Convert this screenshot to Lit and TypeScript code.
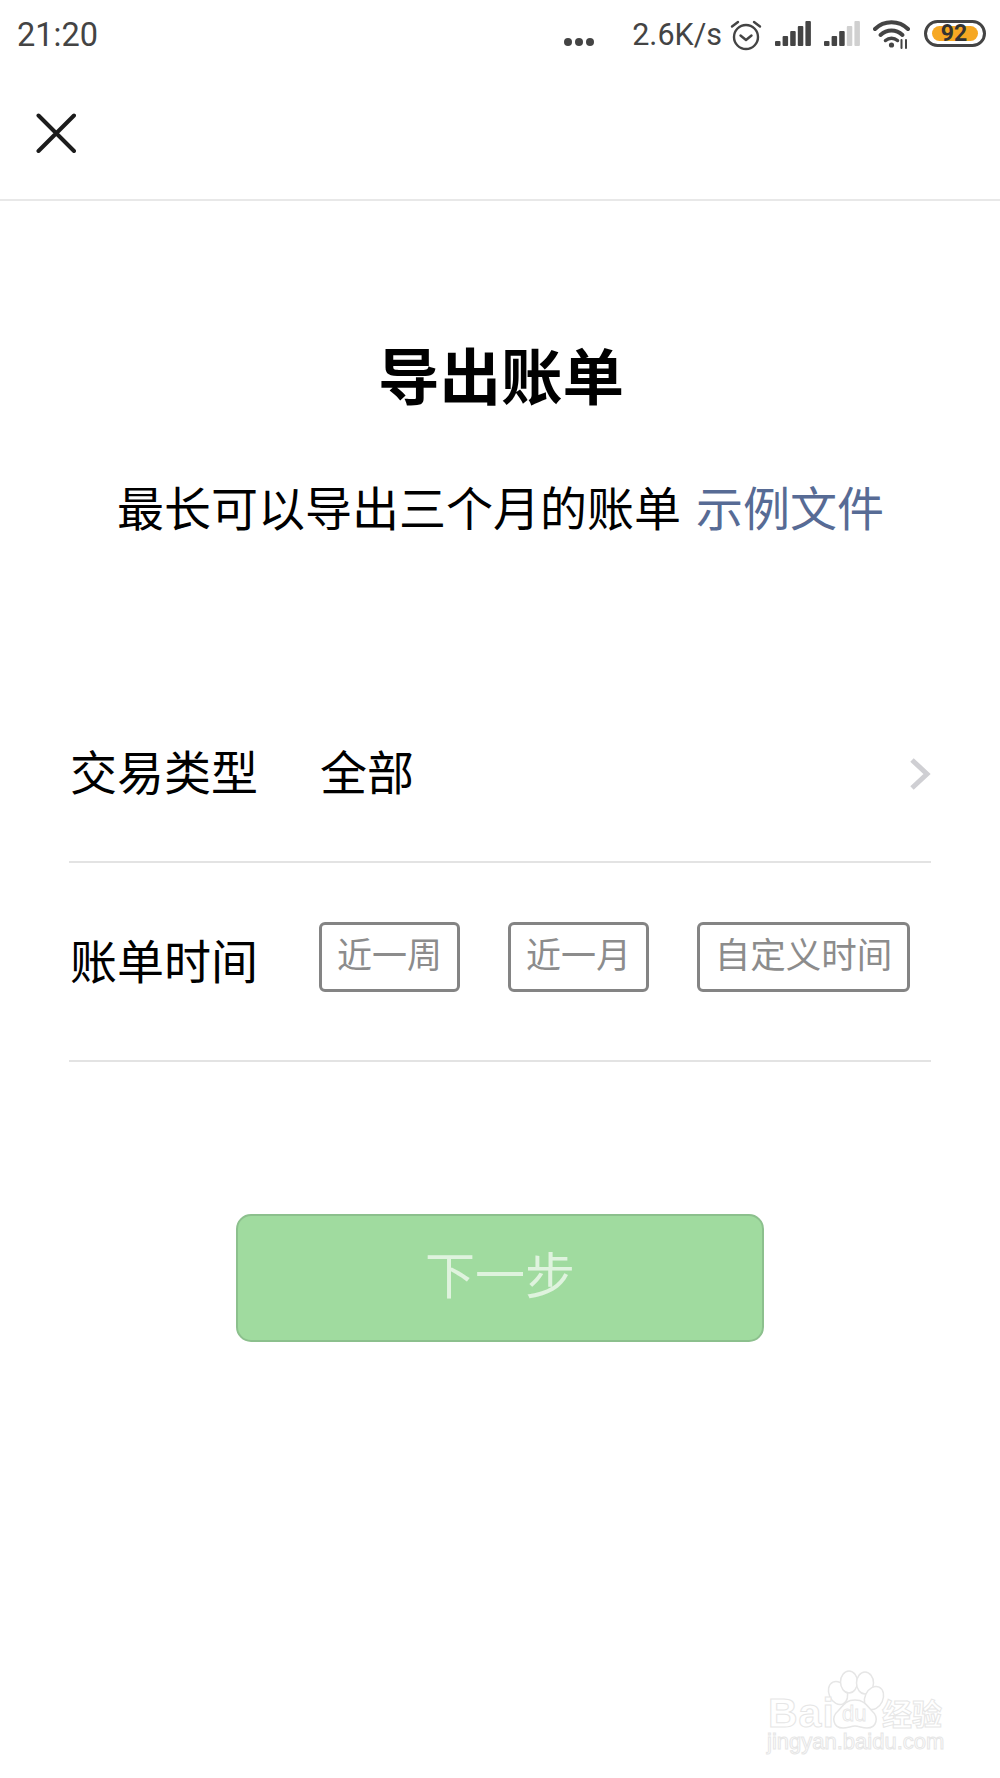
import { LitElement, html, css, svg } from "lit";
import { customElement } from "lit/decorators.js";

const signal = (lit: number) => svg`<svg class="signal" width="36" height="26" viewBox="0 0 36 26">
  ${[0, 1, 2, 3, 4].map((i) => {
    const h = [5, 10, 15, 20, 25][i];
    return svg`<rect x=${i * 7.6} y=${26 - h} width="5.500" height=${h} rx="1" fill=${i < lit ? "#444" : "#d0d0d0"}></rect>`;
  })}
</svg>`;

@customElement("app-root")
export class AppRoot extends LitElement {
  static styles = css`
    :host {
      display: block;
      position: relative;
      width: 1000px;
      height: 1778px;
      background: #fff;
      overflow: hidden;
      font-family: "Noto Sans CJK SC", "Noto Sans", sans-serif;
      color: #000;
    }
    .status {
      height: 70px;
      display: flex;
      align-items: center;
      padding: 0 14px 0 17px;
      color: #444;
      font-family: Roboto, sans-serif;
      box-sizing: border-box;
    }
    .time { font-size: 32.5px; line-height: 70px; }
    .spacer { flex: 1; }
    .dots { display: flex; gap: 3px; margin: 14px 38px 0 0; }
    .dots i { width: 8px; height: 8px; border-radius: 50%; background: #444; }
    .speed { font-size: 30.5px; line-height: 70px; margin-right: 8px; }
    .alarm { margin-right: 13px; }
    .signal { margin-right: 13px; margin-top: -5px; }
    .wifi { margin-right: 13px; margin-top: -2px; }
    .battery {
      width: 62px;
      height: 27px;
      box-sizing: border-box;
      border: 3px solid #444;
      border-radius: 14px;
      padding: 3px;
      margin-top: -4px;
      display: flex;
    }
    .battery span {
      flex: 1;
      background: #f6a823;
      border-radius: 8px;
      margin-left: 2px;
      margin-right: 2px;
      font-size: 23px;
      font-weight: 700;
      line-height: 15px;
      text-align: center;
      color: #333;
      padding-right: 2px;
    }
    .nav {
      height: 131px;
      box-sizing: border-box;
      border-bottom: 2px solid #e8e8e8;
      padding: 43px 0 0 36px;
    }
    .nav svg { display: block; }
    h1 {
      margin: 137px 0 0;
      font-size: 61.5px;
      line-height: 72px;
      font-weight: 700;
      text-align: center;
      padding-left: 2px;
    }
    .sub {
      margin: 61px 0 0;
      font-size: 47px;
      line-height: 70px;
      text-align: center;
      padding-left: 1px;
      white-space: nowrap;
    }
    .sub a { color: #576b95; margin-left: 15px; font-size: 47px; }
    .form { margin: 0 69px; padding-top: 141px; }
    .row {
      border-bottom: 2px solid #e3e3e3;
      display: flex;
      box-sizing: border-box;
    }
    .row.type { height: 181px; padding-top: 56px; align-items: flex-start; }
    .row.time-row { height: 199px; align-items: flex-start; padding-top: 59px; }
    .label {
      width: 250px;
      padding-left: 1px;
      font-size: 47px;
      line-height: 64px;
      box-sizing: border-box;
      flex: none;
    }
    .time-row .label { margin-top: 5px; }
    .value { flex: 1; font-size: 47px; line-height: 64px; padding-left: 1px; }
    .chev { margin-top: 20px; display: block; }
    .chips { display: flex; gap: 48px; }
    .chip {
      height: 70px;
      width: 141px;
      box-sizing: border-box;
      border: 3px solid #848484;
      border-radius: 6px;
      font-size: 35px;
      line-height: 55px;
      color: #8c8c8c;
      text-align: center;
    }
    .chip.wide { width: 213px; font-size: 35.5px; }
    .next {
      display: block;
      margin: 152px 0 0 236px;
      width: 528px;
      height: 128px;
      box-sizing: border-box;
      background: #a0db9f;
      border: 2px solid #8cc08d;
      border-radius: 15px;
      color: #dff3de;
      font-family: inherit;
      font-size: 50px;
      line-height: 112px;
      padding: 0 0 12px;
      text-align: center;
    }
    .mark {
      position: absolute;
      left: 765px;
      top: 1668px;
      width: 190px;
      height: 100px;
      color: #fff;
      font-family: "Liberation Sans", "Noto Sans CJK SC", sans-serif;
      -webkit-text-stroke: 1px #e6e6e6;
    }
    .mark svg { position: absolute; left: 0; top: 0; }
    .mark span { position: absolute; white-space: nowrap; }
    .bai { left: 3px; top: 27px; font-size: 41px; line-height: 36px; font-weight: 700; letter-spacing: 1px; }
    .du { left: 77px; top: 33px; font-size: 22px; line-height: 26px; -webkit-text-stroke: 0.8px #e6e6e6; }
    .jy { left: 117px; top: 27px; font-size: 30px; line-height: 34px; font-family: "Noto Sans CJK SC", sans-serif; font-weight: 700; }
    .url { left: 2px; top: 62px; font-size: 22px; line-height: 24px; }
  `;

  render() {
    return html`
      <div class="status">
        <span class="time">21:20</span>
        <span class="spacer"></span>
        <span class="dots"><i></i><i></i><i></i></span>
        <span class="speed">2.6K/s</span>
        <svg class="alarm" width="32" height="32" viewBox="0 0 32 32" fill="none" stroke="#444" stroke-width="2.400" stroke-linecap="round" stroke-linejoin="round">
          <circle cx="16" cy="18" r="12"></circle>
          <path d="M10.500 16.500 16 21l5.500-4.500"></path>
          <path d="M2 7.500 8 3M30 7.500 24 3"></path>
        </svg>
        ${signal(5)} ${signal(3)}
        <svg class="wifi" width="38" height="32" viewBox="0 0 38 32" fill="none" stroke="#444" stroke-linecap="round">
          <path d="M2 11C11 2 26 2 35 11" stroke-width="4"></path>
          <path d="M7.500 17c6.500-6 15.500-6 22 0" stroke-width="4"></path>
          <path d="M12.500 22.500c3.500-3 8.500-3 12 0" stroke-width="3.500"></path>
          <circle cx="18.500" cy="27" r="2.600" fill="#444" stroke="none"></circle>
          <path d="M28.500 22v8M33 22v8" stroke-width="2"></path>
        </svg>
        <span class="battery"><span>92</span></span>
      </div>
      <div class="nav">
        <svg width="40" height="40" viewBox="0 0 40 40" fill="none" stroke="#1c1c1c" stroke-width="4" stroke-linecap="round">
          <path d="M2.500 2.500 38 38M38 2.500 2.500 38"></path>
        </svg>
      </div>
      <h1>导出账单</h1>
      <p class="sub">最长可以导出三个月的账单<a>示例文件</a></p>
      <div class="form">
        <div class="row type">
          <span class="label">交易类型</span>
          <span class="value">全部</span>
          <svg class="chev" width="22" height="32" viewBox="0 0 22 32" fill="none" stroke="#cfcfd3" stroke-width="5">
            <path d="M3 2 18 16 3 30"></path>
          </svg>
        </div>
        <div class="row time-row">
          <span class="label">账单时间</span>
          <div class="chips">
            <span class="chip">近一周</span>
            <span class="chip">近一月</span>
            <span class="chip wide">自定义时间</span>
          </div>
        </div>
      </div>
      <button class="next">下一步</button>
      <div class="mark">
        <svg width="190" height="100" viewBox="0 0 190 100" fill="#fff" stroke="#e6e6e6" stroke-width="1.500">
          <ellipse cx="73" cy="25" rx="9" ry="12" transform="rotate(-25 73 25)"></ellipse>
          <ellipse cx="84" cy="14" rx="8.500" ry="11"></ellipse>
          <ellipse cx="100" cy="15" rx="8.500" ry="11"></ellipse>
          <ellipse cx="109" cy="30" rx="9" ry="12" transform="rotate(25 109 30)"></ellipse>
          <path d="M78 60c-10 0-12-11-5-17 5-5 7-11 17-11s12 6 17 11c7 6 5 17-5 17-5 0-8-2-12-2s-7 2-12 2z"></path>
        </svg>
        <span class="bai">Bai</span>
        <span class="du">du</span>
        <span class="jy">经验</span>
        <span class="url">jingyan.baidu.com</span>
      </div>
    `;
  }
}
